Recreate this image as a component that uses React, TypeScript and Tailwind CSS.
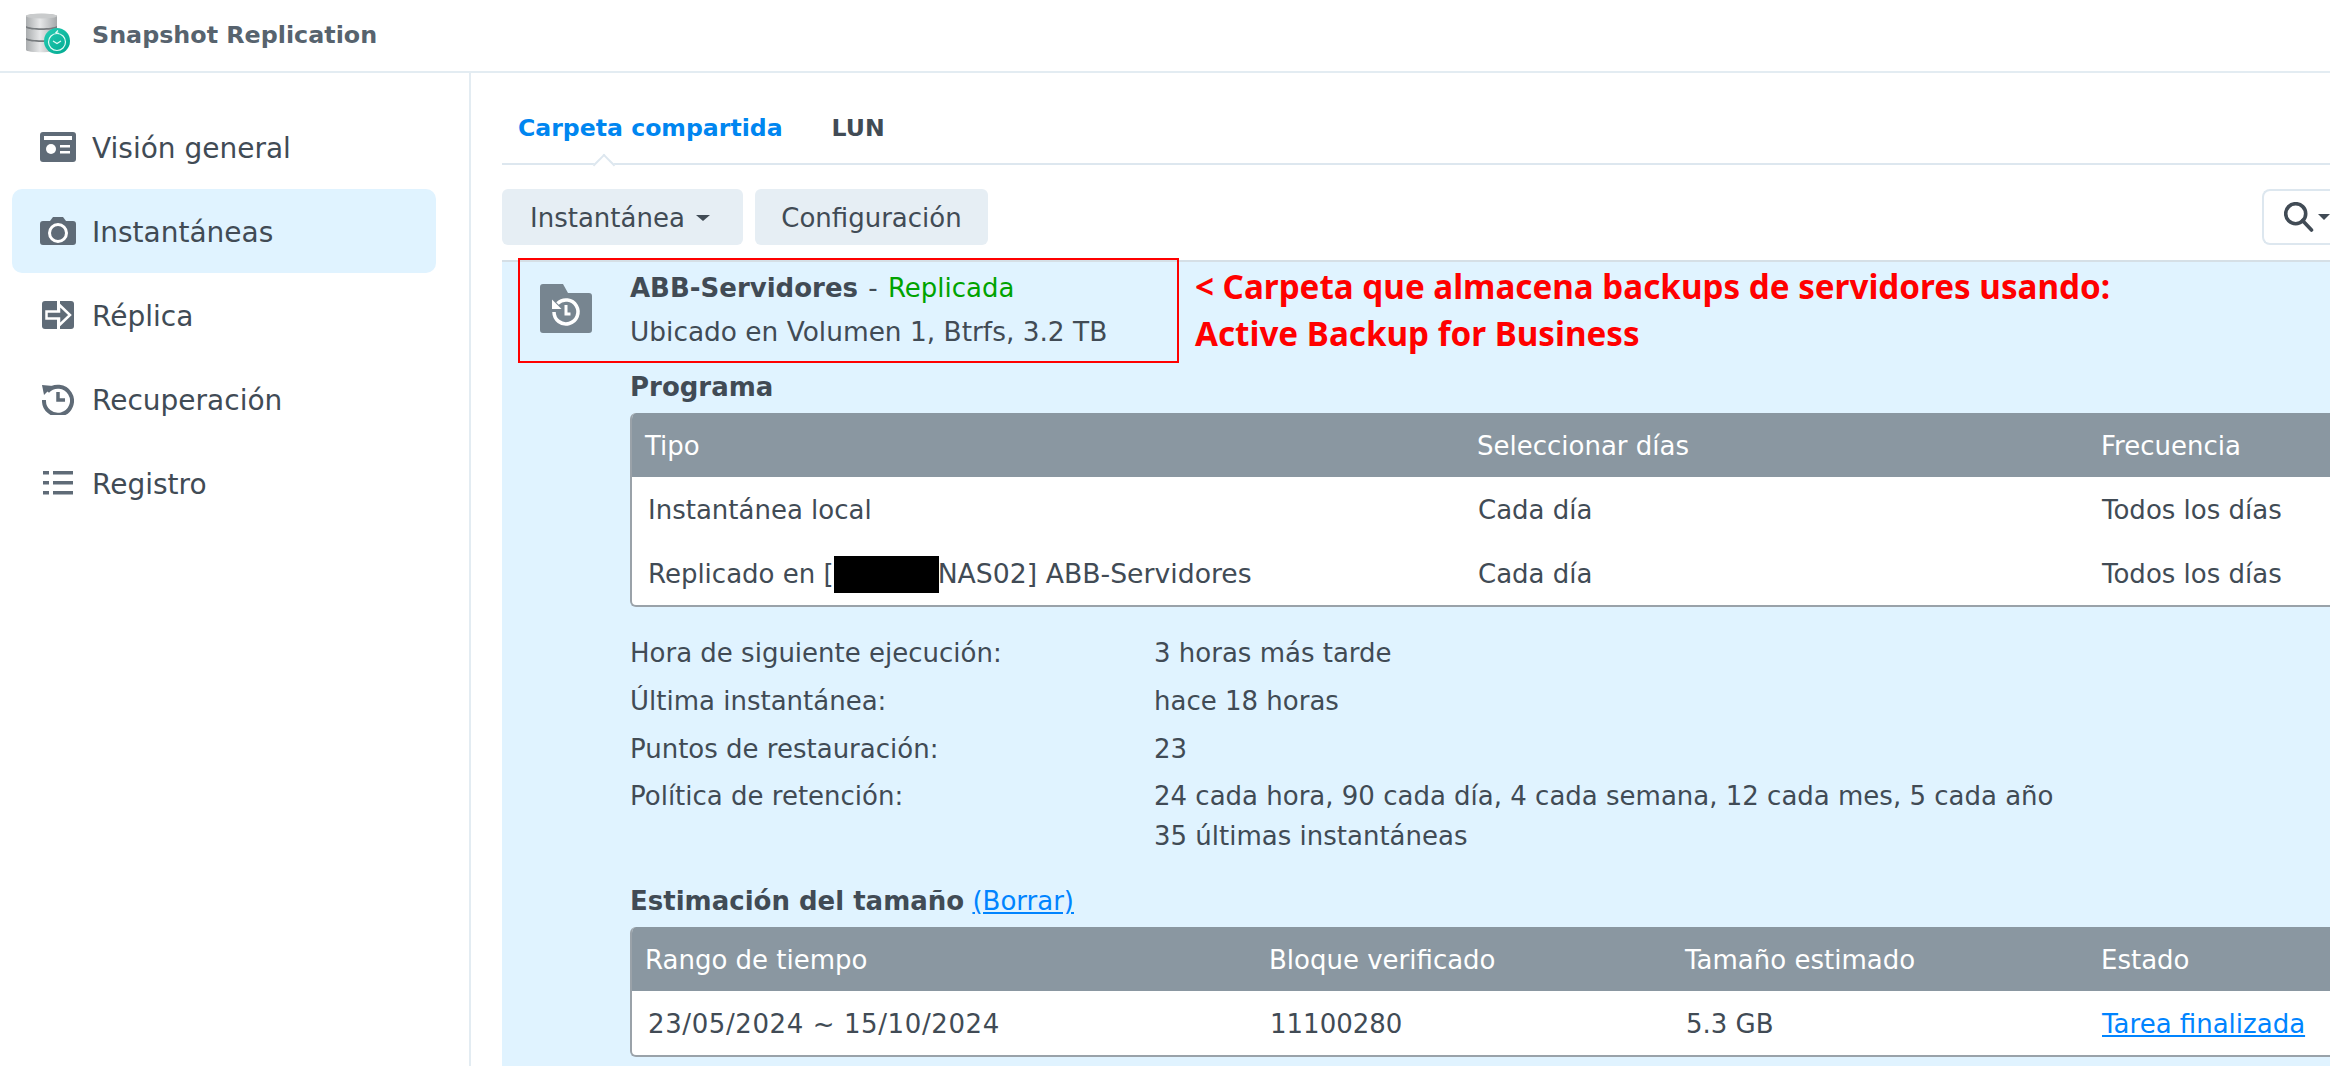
import React from 'react';

const font = "font-['DejaVu_Sans',sans-serif]";

const Logo = () => (
  <svg width="46" height="46" viewBox="0 0 46 46" className="shrink-0">
    <defs>
      <linearGradient id="disk" x1="0" x2="1" y1="0" y2="0">
        <stop offset="0" stopColor="#a9acae" />
        <stop offset="0.45" stopColor="#e6e7e8" />
        <stop offset="1" stopColor="#a5a8aa" />
      </linearGradient>
      <linearGradient id="teal" x1="0" x2="1" y1="0" y2="1">
        <stop offset="0" stopColor="#25cdb4" />
        <stop offset="1" stopColor="#00a88f" />
      </linearGradient>
    </defs>
    <path d="M2 3c0-3 31-3 31 0v34c0 3-31 3-31 0z" fill="url(#disk)" />
    <ellipse cx="17.500" cy="3" rx="15.500" ry="2.600" fill="#c9cbcc" />
    <path d="M2 13c4 3 27 3 31 0v1.800c-4 3-27 3-31 0zM2 25c4 3 27 3 31 0v1.800c-4 3-27 3-31 0z" fill="#777b7e" />
    <circle cx="33" cy="28" r="13" fill="url(#teal)" />
    <circle cx="33" cy="29" r="8.500" fill="none" stroke="#e4fbf6" strokeWidth="1.200" />
    <path d="M29 28l4 2.500 4-2.500M35 20.500l-3-1 2-2" fill="none" stroke="#e4fbf6" strokeWidth="1.200" />
  </svg>
);

const OverviewIcon = () => (
  <svg width="36" height="30" viewBox="0 0 36 30">
    <rect width="36" height="30" rx="3" fill="#5f6b77" />
    <rect x="4" y="4" width="28" height="4" fill="#fff" />
    <circle cx="11" cy="17" r="5" fill="#fff" />
    <rect x="20" y="13" width="10" height="2.500" fill="#fff" />
    <rect x="20" y="19" width="10" height="2.500" fill="#fff" />
  </svg>
);

const CameraIcon = () => (
  <svg width="36" height="28" viewBox="0 0 36 28">
    <path d="M3 4h7l3-4h10l3 4h7a3 3 0 0 1 3 3v18a3 3 0 0 1-3 3H3a3 3 0 0 1-3-3V7a3 3 0 0 1 3-3z" fill="#5f6b77" />
    <circle cx="18" cy="16" r="8.500" fill="none" stroke="#fff" strokeWidth="3" />
  </svg>
);

const ReplicaIcon = () => (
  <svg width="32" height="28" viewBox="0 0 32 28">
    <path d="M3 0h12v28H3a3 3 0 0 1-3-3V3a3 3 0 0 1 3-3z" fill="#5f6b77" />
    <path d="M18 0h11a3 3 0 0 1 3 3v22a3 3 0 0 1-3 3H18z" fill="#5f6b77" />
    <path d="M4.500 10.500H17V3.500L28 14 17 24.500V17.500H4.500z" fill="#5f6b77" stroke="#fff" strokeWidth="2.500" />
  </svg>
);

const HistoryIcon = () => (
  <svg width="32" height="32" viewBox="0 0 32 32">
    <path d="M5.500 8.500A14 14 0 1 1 2 17" fill="none" stroke="#5f6b77" strokeWidth="4" />
    <path d="M0 2l11 1-9 9z" fill="#5f6b77" />
    <path d="M16 9v8h7" fill="none" stroke="#5f6b77" strokeWidth="3.500" />
  </svg>
);

const ListIcon = () => (
  <svg width="30" height="24" viewBox="0 0 30 24" fill="#5f6b77">
    <rect width="6" height="3.500" y="0" />
    <rect x="10" width="20" height="3.500" y="0" />
    <rect width="6" height="3.500" y="10" />
    <rect x="10" width="20" height="3.500" y="10" />
    <rect width="6" height="3.500" y="20" />
    <rect x="10" width="20" height="3.500" y="20" />
  </svg>
);

const FolderIcon = () => (
  <svg width="52" height="49" viewBox="0 0 52 49" className="shrink-0">
    <path d="M3 0h20l5 9h21a3 3 0 0 1 3 3v34a3 3 0 0 1-3 3H3a3 3 0 0 1-3-3V3a3 3 0 0 1 3-3z" fill="#778590" />
    <path d="M17.500 19.500A12 12 0 1 1 14 28" fill="none" stroke="#fff" strokeWidth="3.500" />
    <path d="M12 15.500V25h9.500z" fill="#fff" />
    <path d="M26 21v9h4.500" fill="none" stroke="#fff" strokeWidth="3" />
  </svg>
);

const nav = [
  { label: 'Visión general', icon: <OverviewIcon /> },
  { label: 'Instantáneas', icon: <CameraIcon />, active: true },
  { label: 'Réplica', icon: <ReplicaIcon /> },
  { label: 'Recuperación', icon: <HistoryIcon /> },
  { label: 'Registro', icon: <ListIcon /> },
];

const info = [
  ['Hora de siguiente ejecución:', '3 horas más tarde'],
  ['Última instantánea:', 'hace 18 horas'],
  ['Puntos de restauración:', '23'],
];

const Table = ({ cols, children }: { cols: string; children: React.ReactNode }) => (
  <div className="w-[1800px] rounded-[6px] overflow-hidden bg-white border-l-2 border-b-2 border-[#9aa2a9]">
    <div className={cols}>{children}</div>
  </div>
);

const Head = ({ children }: { children: React.ReactNode }) => (
  <div className="h-[64px] -ml-px bg-[#8a97a1] text-white flex items-center pl-[14px] pt-[2px]">{children}</div>
);

const Cell = ({ children, first }: { children: React.ReactNode; first?: boolean }) => (
  <div className={`h-[64px] flex items-center whitespace-pre pt-[2px] ${first ? 'pl-[16px]' : 'pl-[14px]'}`}>{children}</div>
);

export default function App() {
  return (
    <div className={`h-screen w-full overflow-hidden bg-white text-[#414b55] flex flex-col ${font}`}>
      <header className="h-[73px] shrink-0 border-b-2 border-[#e3ecf2] flex items-center pl-[24px] gap-[22px]">
        <Logo />
        <span className="text-[23.800px] font-bold text-[#57636e]">Snapshot Replication</span>
      </header>

      <div className="flex flex-1 min-h-0">
        <aside className="w-[471px] shrink-0 border-r-2 border-[#e3ecf2] pt-[32px] pr-[33px] pl-[12px]">
          {nav.map((item) => (
            <div
              key={item.label}
              className={`h-[84px] flex items-center rounded-[10px] ${item.active ? 'bg-[#e0f3ff]' : ''}`}
            >
              <div className="w-[64px] pl-[28px] flex items-center justify-center shrink-0">{item.icon}</div>
              <span className="ml-[16px] text-[28px] pt-[4px]">{item.label}</span>
            </div>
          ))}
        </aside>

        <main className="flex-1 min-w-0 pl-[31px] overflow-hidden">
          <div className="h-[92px] relative border-b-2 border-[#dde7ef] flex items-center pl-[16px] gap-[49px] text-[23.600px] font-bold pt-[22px]">
            <span className="text-[#0086f0]">Carpeta compartida</span>
            <span>LUN</span>
            <div className="absolute left-[94px] -bottom-[2px] w-[16px] h-[16px] bg-white border-l-2 border-t-2 border-[#dde7ef] rotate-45 translate-y-[8px]" />
          </div>

          <div className="flex items-center gap-[12px] mt-[24px] text-[26px] relative">
            <button className="h-[56px] w-[241px] rounded-[6px] bg-[#e6eef4] flex items-center pl-[28px] gap-[11px] pt-[2px]">
              Instantánea
              <span className="w-0 h-0 border-x-[7px] border-x-transparent border-t-[6px] border-t-[#414b55]" />
            </button>
            <button className="h-[56px] w-[233px] rounded-[6px] bg-[#e6eef4] flex items-center justify-center pt-[2px]">
              Configuración
            </button>
            <div className="ml-auto h-[56px] w-[68px] rounded-l-[8px] border-2 border-r-0 border-[#dde7ef] flex items-center pl-[20px]">
              <svg width="30" height="30" viewBox="0 0 30 30" fill="none" stroke="#414b55" strokeWidth="3.600">
                <circle cx="11.700" cy="11.700" r="10" />
                <path d="M18.500 18.500l9 9.500" strokeLinecap="round" />
              </svg>
              <span className="ml-[4px] w-0 h-0 border-x-[6px] border-x-transparent border-t-[6px] border-t-[#414b55]" />
            </div>
          </div>

          <div className="relative mt-[15px] border-t-2 border-[#d5dfe6] bg-[#e0f3ff] h-[820px] text-[26px]">
            {/* annotation */}
            <div className="absolute left-[16px] -top-[4px] w-[661px] h-[105px] border-2 border-[#ff0000]" />
            <div className="absolute left-[693px] top-[1px] text-[33.200px] font-bold text-[#ff0000] font-['Noto_Sans',sans-serif] leading-[47px] whitespace-nowrap">
              <div>&lt; Carpeta que almacena backups de servidores usando:</div>
              <div>Active Backup for Business</div>
            </div>

            <div className="flex pl-[38px] pt-[3px]">
              <div className="pt-[19px]">
                <FolderIcon />
              </div>
              <div className="ml-[38px]">
                <div className="h-[44px] flex items-center whitespace-pre pt-[2px]">
                  <span className="font-bold">ABB-Servidores</span>
                  <span className="px-[2px]"> - </span>
                  <span className="text-[#00a300]">Replicada</span>
                </div>
                <div className="h-[44px] flex items-center pt-[2px] text-[26.400px]">Ubicado en Volumen 1, Btrfs, 3.2 TB</div>
              </div>
            </div>

            <div className="pl-[128px]">
              <div className="h-[44px] mt-[11px] flex items-center font-bold pt-[2px]">Programa</div>
              <div className="mt-[5px]">
                <Table cols="grid grid-cols-[832px_624px_1fr]">
                  <Head>Tipo</Head>
                  <Head>Seleccionar días</Head>
                  <Head>Frecuencia</Head>
                  <Cell first>Instantánea local</Cell>
                  <Cell>Cada día</Cell>
                  <Cell>Todos los días</Cell>
                  <Cell first>
                    Replicado en [<span className="inline-block w-[105px] h-[37px] -mr-[1px] bg-black" />
                    <span className="text-[26.700px]">NAS02] ABB-Servidores</span>
                  </Cell>
                  <Cell>Cada día</Cell>
                  <Cell>Todos los días</Cell>
                </Table>
              </div>

              <div className="mt-[21px]">
                {info.map(([label, value]) => (
                  <div key={label} className="h-[48px] flex items-center pt-[2px]">
                    <span className="w-[524px] shrink-0">{label}</span>
                    <span>{value}</span>
                  </div>
                ))}
                <div className="flex pt-[4px] leading-[40px]">
                  <span className="w-[524px] shrink-0">Política de retención:</span>
                  <div>
                    <div>24 cada hora, 90 cada día, 4 cada semana, 12 cada mes, 5 cada año</div>
                    <div>35 últimas instantáneas</div>
                  </div>
                </div>
              </div>

              <div className="h-[44px] mt-[22px] flex items-center whitespace-pre pt-[2px]">
                <span className="font-bold">Estimación del tamaño</span>
                <span> </span>
                <a href="#" className="text-[#0084ff] underline">(Borrar)</a>
              </div>
              <div className="mt-[5px]">
                <Table cols="grid grid-cols-[624px_416px_416px_1fr]">
                  <Head>Rango de tiempo</Head>
                  <Head>Bloque verificado</Head>
                  <Head>Tamaño estimado</Head>
                  <Head>Estado</Head>
                  <Cell first>
                    <span className="tracking-[0.6px]">23/05/2024 ~ 15/10/2024</span>
                  </Cell>
                  <Cell>11100280</Cell>
                  <Cell>5.3 GB</Cell>
                  <Cell>
                    <a href="#" className="text-[#0084ff] underline">Tarea finalizada</a>
                  </Cell>
                </Table>
              </div>
            </div>
          </div>
        </main>
      </div>
    </div>
  );
}
